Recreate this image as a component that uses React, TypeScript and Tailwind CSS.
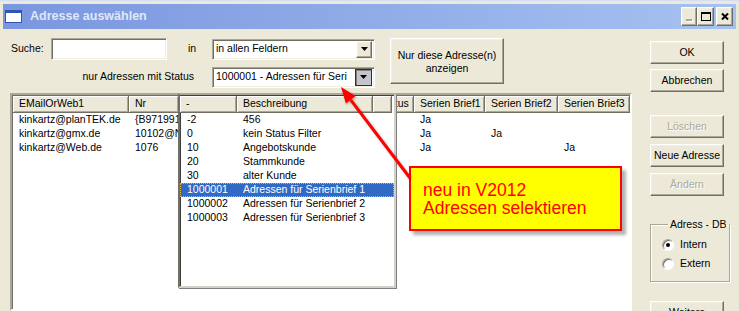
import React from "react";

const btn =
  "flex items-center justify-center bg-[#ece9d8] border border-t-white border-l-white border-r-[#716f64] border-b-[#716f64] shadow-[inset_-1px_-1px_0_#aca899,inset_1px_1px_0_#f1efe2] text-[10.5px] text-black whitespace-nowrap";
const btnOff =
  "flex items-center justify-center bg-[#ece9d8] border border-t-white border-l-white border-r-[#716f64] border-b-[#716f64] shadow-[inset_-1px_-1px_0_#aca899,inset_1px_1px_0_#f1efe2] text-[10.5px] text-[#aca899] [text-shadow:1px_1px_0_#fff]";
const sunken =
  "bg-white border border-t-[#aca899] border-l-[#aca899] border-r-white border-b-white shadow-[inset_1px_1px_0_#716f64,inset_-1px_-1px_0_#f1efe2]";
const headCell =
  "h-[17px] flex items-center pl-[6px] bg-[#ece9d8] border-r border-b border-r-[#716f64] border-b-[#716f64] shadow-[inset_1px_1px_0_#fff,inset_-1px_-1px_0_#aca899] whitespace-nowrap overflow-hidden shrink-0";

function DownArrow() {
  return (
    <svg width="7" height="4" viewBox="0 0 7 4">
      <polygon points="0,0 7,0 3.5,4" fill="#000" />
    </svg>
  );
}

function Combo({ value, pressed }: { value: string; pressed?: boolean }) {
  return (
    <div className={`${sunken} w-[163px] h-[21px] flex items-center pl-[3px] pr-[2px]`}>
      <span className="flex-1 text-[10.5px] whitespace-nowrap overflow-hidden">{value}</span>
      {pressed ? (
        <div className="w-[17px] h-[17px] bg-[#c4c4cc] border border-[#303030] shadow-[inset_1px_1px_0_#808080] flex items-center justify-center">
          <DownArrow />
        </div>
      ) : (
        <div className={`${btn} w-[16px] h-[17px]`}>
          <DownArrow />
        </div>
      )}
    </div>
  );
}

function Radio({ checked, label }: { checked?: boolean; label: string }) {
  return (
    <div className="flex items-center h-[14px]">
      <div className="w-[12px] h-[12px] rounded-full bg-white border border-t-[#aca899] border-l-[#aca899] border-r-white border-b-white shadow-[inset_1px_1px_0_#716f64] flex items-center justify-center">
        {checked && <div className="w-[4px] h-[4px] rounded-full bg-black" />}
      </div>
      <span className="ml-[6px] text-[10.5px]">{label}</span>
    </div>
  );
}

// Nr column is cut by the open dropdown at x=178; the hidden columns sit underneath it
const cols = [116, 50, 194, 41, 71, 73, 72];
const heads = ["EMailOrWeb1", "Nr", "", "Status", "Serien Brief1", "Serien Brief2", "Serien Brief3"];
const rows = [
  ["kinkartz@planTEK.de", "{B971991", "", "", "Ja", "", ""],
  ["kinkartz@gmx.de", "10102@N", "", "", "Ja", "Ja", ""],
  ["kinkartz@Web.de", "1076", "", "", "Ja", "", "Ja"],
];

const status = [
  ["-2", "456"],
  ["0", "kein Status Filter"],
  ["10", "Angebotskunde"],
  ["20", "Stammkunde"],
  ["30", "alter Kunde"],
  ["1000001", "Adressen für Serienbrief 1"],
  ["1000002", "Adressen für Serienbrief 2"],
  ["1000003", "Adressen für Serienbrief 3"],
];

export default function App() {
  return (
    <div className="relative w-[739px] h-[311px] overflow-hidden bg-[#ece9d8] px-[3px] pt-[3px] border-t border-t-[#d4def5] font-['Liberation_Sans',Arial,sans-serif] text-black flex flex-col">
      {/* title bar */}
      <div className="h-[25px] shrink-0 flex items-center pl-[2px] pr-[3px] bg-gradient-to-r from-[#7a96df] to-[#a6c2f1]">
        <div className="w-[17px] h-[13px] bg-white border border-[#2c55b8] border-t-[3px]" />
        <span className="ml-[8px] text-[12.5px] font-bold text-[#dfe7f8]">Adresse auswählen</span>
        <div className="ml-auto flex items-center">
          <div className={`${btn} w-[16px] h-[19px]`}>
            <div className="w-[6px] h-[2px] bg-[#aca899] mt-[7px] shadow-[1px_1px_0_#fff]" />
          </div>
          <div className={`${btn} w-[17px] h-[19px]`}>
            <div className="w-[10px] h-[9px] border border-black border-t-2" />
          </div>
          <div className={`${btn} w-[17px] h-[19px] ml-[2px]`}>
            <svg width="8" height="7" viewBox="0 0 8 7">
              <path d="M1 0.5 L7 6.5 M7 0.5 L1 6.5" stroke="#000" strokeWidth="2" />
            </svg>
          </div>
        </div>
      </div>

      {/* body */}
      <div className="flex flex-1 min-h-0">
        <div className="w-[629px] pl-[7px] pt-[9px] flex flex-col min-h-0">
          <div className="flex items-start shrink-0">
            <div className="flex flex-col gap-[6px]">
              <div className="flex items-center h-[22px]">
                <span className="w-[41px] text-[10.5px] pl-[1px]">Suche:</span>
                <div className={`${sunken} w-[116px] h-[22px]`} />
                <span className="ml-[21px] w-[24px] text-[10.5px]">in</span>
                <Combo value="in allen Feldern" />
              </div>
              <div className="flex items-center h-[22px]">
                <span className="w-[202px] pr-[18px] text-right text-[10.5px]">nur Adressen mit Status</span>
                <Combo value="1000001 - Adressen für Seri" pressed />
              </div>
            </div>
            <div className={`${btn} ml-[15px] w-[114px] h-[46px] flex-col leading-[13px] pt-[2px]`}>
              <span>Nur diese Adresse(n)</span>
              <span>anzeigen</span>
            </div>
          </div>

          {/* main list */}
          <div className="mt-[5px] w-[622px] flex-1 min-h-0 border-2 border-t-[#aca899] border-l-[#aca899] border-r-white border-b-white shadow-[inset_1px_1px_0_#716f64] bg-white text-[10.5px] overflow-hidden pt-[1px] pl-[1px]">
            <div className="flex">
              {heads.map((h, i) => (
                <div key={i} className={headCell} style={{ width: cols[i] }}>
                  {h}
                </div>
              ))}
            </div>
            {rows.map((r, ri) => (
              <div key={ri} className="flex h-[14px] items-center">
                {r.map((c, ci) => (
                  <div key={ci} className="shrink-0 pl-[6px] whitespace-nowrap overflow-hidden" style={{ width: cols[ci] }}>
                    {c}
                  </div>
                ))}
              </div>
            ))}
          </div>
        </div>

        {/* right column */}
        <div className="ml-[18px] w-[74px] pt-[12px] flex flex-col">
          <div className={`${btn} h-[23px] shrink-0`}>OK</div>
          <div className={`${btn} h-[23px] mt-[5px] shrink-0`}>Abbrechen</div>
          <div className={`${btnOff} h-[23px] mt-[23px] shrink-0`}>Löschen</div>
          <div className={`${btn} h-[23px] mt-[6px] shrink-0`}>Neue Adresse</div>
          <div className={`${btnOff} h-[23px] mt-[6px] shrink-0`}>Ändern</div>
          <fieldset className="mt-[22px] h-[64px] shrink-0 border border-[#aca899] shadow-[1px_1px_0_#fff,inset_1px_1px_0_#fff] pl-[11px]">
            <legend className="ml-[6px] px-[2px] text-[10.5px] leading-[13px] whitespace-nowrap">Adress - DB</legend>
            <div className="flex flex-col gap-[5px] pt-[7px]">
              <Radio checked label="Intern" />
              <Radio label="Extern" />
            </div>
          </fieldset>
          <div className={`${btn} h-[23px] mt-[19px] shrink-0`}>Weitere</div>
        </div>
      </div>

      {/* status dropdown popup */}
      <div className="absolute left-[178px] top-[92px] w-[218px] h-[195px] bg-white border-2 border-t-[#aca899] border-l-[#716f64] border-r-[#d4d0c8] border-b-[#d4d0c8] shadow-[1px_1px_0_#808080,inset_1px_1px_0_#404040] text-[10.5px] pt-[1px]">
        <div className="flex">
          <div className={headCell} style={{ width: 57 }}>-</div>
          <div className={headCell} style={{ width: 136 }}>Beschreibung</div>
          <div className={headCell} style={{ width: 19 }} />
        </div>
        {status.map(([n, d]) => {
          const sel = n === "1000001";
          return (
            <div
              key={n}
              className={
                sel
                  ? "flex h-[14px] items-center bg-[#316ac5] text-white outline-1 outline-dotted outline-[#d9b35a] -outline-offset-1"
                  : "flex h-[14px] items-center"
              }
            >
              <span className="w-[57px] pl-[7px] shrink-0">{n}</span>
              <span className="pl-[6px] whitespace-nowrap">{d}</span>
            </div>
          );
        })}
      </div>

      {/* callout */}
      <div className="absolute left-[409px] top-[165px] w-[213px] h-[65px] bg-[#ffff00] border-2 border-[#ff0000] shadow-[4px_4px_3px_rgba(0,0,0,0.3)] pl-[12px] pt-[13px] text-[17.5px] leading-[18px] text-[#ff0000]">
        <div>neu in V2012</div>
        <div>Adressen selektieren</div>
      </div>

      {/* arrow */}
      <svg className="absolute left-0 top-0 pointer-events-none" width="739" height="311" viewBox="0 0 739 311">
        <g style={{ filter: "drop-shadow(1px 1px 1px rgba(0,0,0,0.3))" }}>
          <line x1="410" y1="177" x2="350.7" y2="98.8" stroke="#ff0000" strokeWidth="3" />
          <polygon points="341,86 355.5,95.1 345.9,102.4" fill="#ff0000" />
        </g>
      </svg>
    </div>
  );
}
